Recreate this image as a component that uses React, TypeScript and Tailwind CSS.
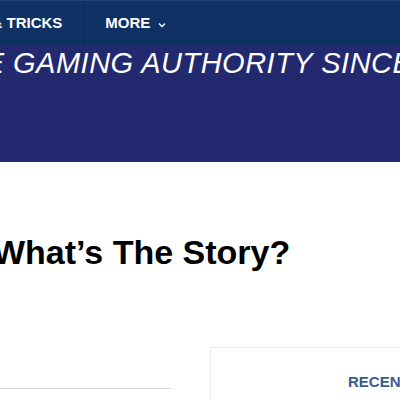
export default function App() {
    return (
        <div className="w-[400px] h-[400px] overflow-hidden bg-white font-['Liberation_Sans',Arial,sans-serif]">
            {/* Top nav */}
            <nav className="h-[45px] bg-[#0f3163] border-t border-[#1f4273] flex items-stretch">
                <div className="-ml-[46px] pr-[21px] flex items-center border-r border-[#0b2850] text-white font-bold text-[15px] whitespace-nowrap">
                    TIPS &amp; TRICKS
                </div>
                <div className="pl-[21px] flex items-center gap-[8px] text-white font-bold text-[15px] whitespace-nowrap">
                    MORE
                    <svg width="8" height="6" viewBox="0 0 8 6" className="mt-[3px]">
                        <path d="M1 1.5 L4 4.5 L7 1.5" fill="none" stroke="white" strokeWidth="1.3" />
                    </svg>
                </div>
            </nav>

            {/* Banner */}
            <div className="h-[117px] bg-[#22296f] flow-root">
                <div className="-mt-[3px] -ml-[55px] text-white italic text-[29px] whitespace-nowrap tracking-[0.5px]">
                    THE GAMING AUTHORITY SINCE 1981
                </div>
            </div>

            {/* Heading */}
            <div className="pt-[71px]">
                <h1 className="-ml-[7px] text-black font-bold text-[34px] leading-[38px] whitespace-nowrap">
                    What’s The Story?
                </h1>
            </div>

            {/* Content row */}
            <div className="mt-[76px] flex gap-[39px]">
                <div className="w-[171px] shrink-0 pt-[41px]">
                    <div className="border-b border-[#d9d9d9]" />
                </div>
                <div className="w-[300px] shrink-0 h-[80px] border border-[#ebebeb] pl-[137px] pt-[23px]">
                    <div className="text-[#3a5a92] font-bold text-[15px] whitespace-nowrap">RECENT POSTS</div>
                </div>
            </div>
        </div>
    );
}
